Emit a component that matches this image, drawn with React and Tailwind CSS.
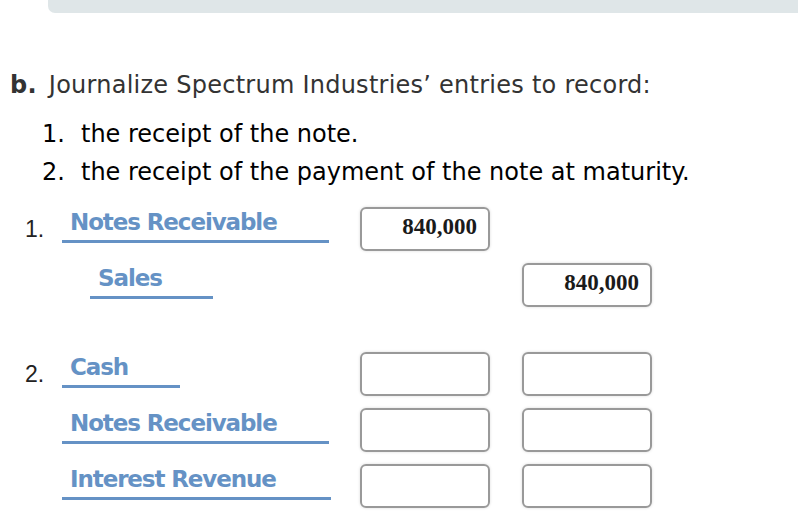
export default function App() {
  return (
    <div className="w-[798px] h-[532px] bg-white overflow-hidden">
      <div className="ml-[48px] h-[13px] bg-[#dfe6e8] rounded-bl-[7px]"></div>

      <div className="pl-[10px] mt-[57px] text-[#333] text-[24px] leading-[30px] tracking-[0.25px] font-['DejaVu_Sans',sans-serif]">
        <span className="font-bold">b.</span>
        <span className="ml-[12px]">Journalize Spectrum Industries’ entries to record:</span>
      </div>

      <ol className="pl-[42px] mt-[15px] text-black text-[24px] leading-[38px] font-['DejaVu_Sans',sans-serif]">
        <li className="flex"><span className="w-[39px]">1.</span><span>the receipt of the note.</span></li>
        <li className="flex"><span className="w-[39px]">2.</span><span>the receipt of the payment of the note at maturity.</span></li>
      </ol>

      {/* entry 1 */}
      <div className="mt-[16px]">
        <Row num="1." label="Notes Receivable" lineW={267} indent={0} debit="840,000" />
        <Row label="Sales" lineW={123} indent={28} credit="840,000" showDebit={false} />
      </div>

      {/* entry 2 */}
      <div className="mt-[33px]">
        <Row num="2." label="Cash" lineW={118} indent={0} debit="" credit="" />
        <Row label="Notes Receivable" lineW={267} indent={0} debit="" credit="" />
        <Row label="Interest Revenue" lineW={269} indent={0} debit="" credit="" />
      </div>
    </div>
  );
}

function Row({ num, label, lineW, indent, debit, credit, showDebit = true }) {
  return (
    <div className="flex items-start h-[56px]">
      <div className="w-[62px] h-[37px] pl-[25px] pb-[3px] flex items-end font-['Liberation_Sans',sans-serif] text-[23px] leading-[23px] text-[#222]">
        {num}
      </div>
      <div className="w-[298px] h-[36px] flex items-end">
        <div
          className="font-['DejaVu_Sans',sans-serif] font-bold text-[23px] leading-[23px] tracking-[-1.1px] text-[#6592c5] border-b-[3px] border-[#6592c5] pl-[8px] pb-[6px] whitespace-nowrap"
          style={{ width: lineW, marginLeft: indent }}
        >
          {label}
        </div>
      </div>
      {showDebit ? <Box value={debit} /> : <div className="w-[130px]"></div>}
      <div className="w-[32px]"></div>
      {credit !== undefined && <Box value={credit} />}
    </div>
  );
}

function Box({ value }) {
  return (
    <div className="w-[130px] h-[44px] rounded-[6px] border-2 border-[#999] shadow-[0_0_3px_rgba(0,0,0,0.15)] flex items-center justify-end pr-[11px] pb-[3px] font-['Liberation_Serif',serif] font-bold text-[23px] text-[#1a1a1a]">
      {value}
    </div>
  );
}
